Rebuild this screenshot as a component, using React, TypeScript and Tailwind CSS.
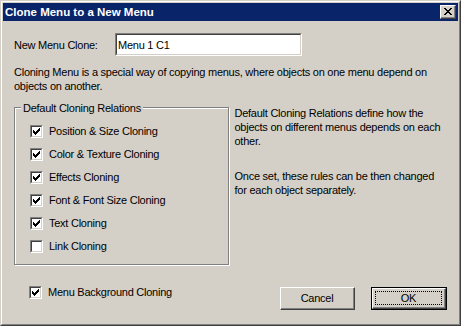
import React, { useState } from "react";

const FONT = { fontFamily: '"Liberation Sans", Arial, sans-serif' };

function CheckMark() {
  // classic 7x7 pixel tick
  const px: [number, number, number][] = [
    [0, 6, 1],
    [1, 5, 2],
    [2, 0, 1],
    [2, 4, 3],
    [3, 0, 2],
    [3, 3, 3],
    [4, 0, 5],
    [5, 1, 3],
    [6, 2, 1],
  ];
  return (
    <svg width="7" height="7" viewBox="0 0 7 7" shapeRendering="crispEdges">
      {px.map(([y, x, w], i) => (
        <rect key={i} x={x} y={y} width={w} height={1} fill="#000" />
      ))}
    </svg>
  );
}

function CloseGlyph() {
  const px: [number, number, number][] = [
    [0, 0, 2],
    [0, 6, 2],
    [1, 1, 2],
    [1, 5, 2],
    [2, 2, 4],
    [3, 3, 2],
    [4, 2, 4],
    [5, 1, 2],
    [5, 5, 2],
    [6, 0, 2],
    [6, 6, 2],
  ];
  return (
    <svg width="8" height="7" viewBox="0 0 8 7" shapeRendering="crispEdges">
      {px.map(([y, x, w], i) => (
        <rect key={i} x={x} y={y} width={w} height={1} fill="#000" />
      ))}
    </svg>
  );
}

function Check({ label, initial }: { label: string; initial: boolean }) {
  const [on, setOn] = useState(initial);
  return (
    <button
      type="button"
      onClick={() => setOn(!on)}
      className="flex items-center gap-[6px] text-left"
    >
      <span className="w-[13px] h-[13px] border border-t-[#808080] border-l-[#808080] border-r-white border-b-white flex">
        <span className="flex-1 border border-t-[#404040] border-l-[#404040] border-r-[#d4d0c8] border-b-[#d4d0c8] bg-white flex items-center justify-center">
          {on && <CheckMark />}
        </span>
      </span>
      <span className="leading-[14px] whitespace-nowrap">{label}</span>
    </button>
  );
}

const RELATIONS = [
  { label: "Position & Size Cloning", on: true },
  { label: "Color & Texture Cloning", on: true },
  { label: "Effects Cloning", on: true },
  { label: "Font & Font Size Cloning", on: true },
  { label: "Text Cloning", on: true },
  { label: "Link Cloning", on: false },
];

export default function App() {
  const [name, setName] = useState("Menu 1 C1");

  return (
    <div
      style={FONT}
      className="w-[461px] h-[326px] border border-t-[#d4d0c8] border-l-[#d4d0c8] border-r-[#404040] border-b-[#404040] text-[11px] text-black select-none"
    >
      <div className="h-full border border-t-white border-l-white border-r-[#808080] border-b-[#808080] bg-[#d4d0c8] p-px flex flex-col">
        {/* title bar */}
        <div className="h-[18px] bg-[#0a246a] flex items-center justify-between pl-[2px] pr-[2px]">
          <span className="text-white font-bold text-[11.5px] leading-[18px]">
            Clone Menu to a New Menu
          </span>
          <span className="w-[16px] h-[14px] border border-t-white border-l-white border-r-[#404040] border-b-[#404040] flex">
            <span className="flex-1 border-r border-b border-[#808080] bg-[#d4d0c8] flex items-center justify-center pl-px">
              <CloseGlyph />
            </span>
          </span>
        </div>

        {/* body */}
        <div className="flex-1 flex flex-col px-[11px] pt-[12px] tracking-[-0.25px]">
          <div className="flex items-center">
            <span className="w-[101px] leading-[14px]">New Menu Clone:</span>
            <div className="w-[187px] h-[23px] border border-t-[#808080] border-l-[#808080] border-r-white border-b-white flex">
              <div className="flex-1 border border-t-[#404040] border-l-[#404040] border-r-[#d4d0c8] border-b-[#d4d0c8] bg-white flex items-center">
                <input
                  value={name}
                  onChange={(e) => setName(e.target.value)}
                  className="w-full outline-none bg-transparent px-px leading-[14px] text-[11px] tracking-[-0.25px]"
                  style={FONT}
                />
              </div>
            </div>
          </div>

          <p className="mt-[9px] leading-[14px]">
            <span className="whitespace-nowrap">
              Cloning Menu is a special way of copying menus, where objects on one menu depend on
            </span>
            <br />
            objects on another.
          </p>

          <div className="flex mt-[14px]">
            {/* group box */}
            <div className="relative w-[218px] h-[158px] border border-[#808080] shadow-[inset_1px_1px_0_#fff,1px_1px_0_#fff]">
              <span className="absolute -top-[7px] left-[6px] px-[2px] bg-[#d4d0c8] leading-[14px]">
                Default Cloning Relations
              </span>
              <div className="flex flex-col pt-[16px] pl-[15px] gap-[9px]">
                {RELATIONS.map((r) => (
                  <Check key={r.label} label={r.label} initial={r.on} />
                ))}
              </div>
            </div>

            <div className="ml-[6px] -mt-[1px] leading-[14px] w-[216px]">
              <p>
                Default Cloning Relations define how the objects on different menus depends on each
                other.
              </p>
              <p className="mt-[21px]">
                Once set, these rules can be then changed for each object separately.
              </p>
            </div>
          </div>

          <div className="flex items-start justify-between mt-[20px]">
            <div className="pl-[15px]">
              <Check label="Menu Background Cloning" initial={true} />
            </div>
            <div className="flex gap-[16px] mt-[2px]">
              <button
                type="button"
                className="w-[75px] h-[23px] border border-t-white border-l-white border-r-[#404040] border-b-[#404040] flex"
              >
                <span className="flex-1 border-r border-b border-[#808080] flex items-center justify-center leading-[14px]">
                  Cancel
                </span>
              </button>
              <button
                type="button"
                className="w-[76px] h-[23px] border border-black flex"
              >
                <span className="flex-1 border border-t-white border-l-white border-r-[#404040] border-b-[#404040] flex">
                  <span className="flex-1 border-r border-b border-[#808080] flex p-[2px]">
                    <span className="flex-1 border border-dotted border-black flex items-center justify-center leading-[14px]">
                      OK
                    </span>
                  </span>
                </span>
              </button>
            </div>
          </div>
        </div>
      </div>
    </div>
  );
}
